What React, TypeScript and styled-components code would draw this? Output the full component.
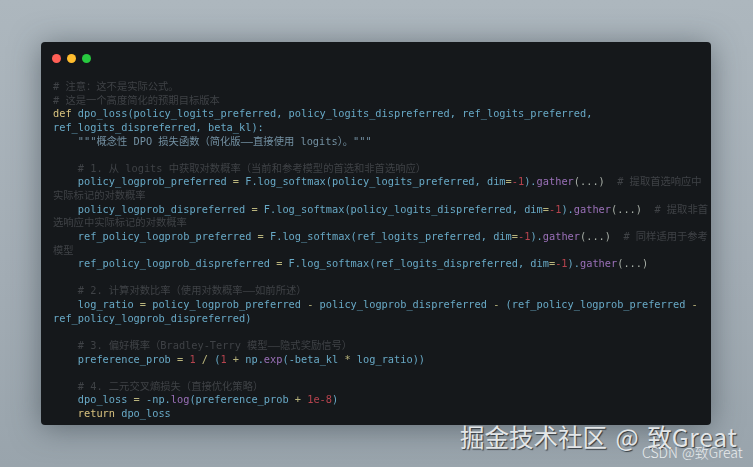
import React from "react";
import styled, { createGlobalStyle } from "styled-components";

const Global = createGlobalStyle`
  html, body { margin: 0; padding: 0; }
  body { width: 753px; height: 467px; overflow: hidden; }
`;

const Page = styled.div`
  position: relative;
  width: 753px;
  height: 467px;
  padding: 42px 42px 42px 41px;
  box-sizing: border-box;
  background: linear-gradient(180deg, #adb7be 0%, #a2acb4 60%, #99a4ac 100%);
  overflow: hidden;
`;

const Window = styled.div`
  height: 383px;
  box-sizing: border-box;
  padding: 12px 12px 0 12px;
  background: #15181b;
  border-radius: 4px;
  box-shadow: 0 3px 30px rgba(50, 60, 68, 0.55);
`;

const Dots = styled.div`
  display: flex;
  gap: 6px;
  margin-left: -1px;
  height: 10px;
`;

const Dot = styled.span<{ $c: string }>`
  width: 9px;
  height: 9px;
  border-radius: 50%;
  background: ${(p) => p.$c};
`;

const Code = styled.pre`
  margin: 16px 0 0;
  font-family: "DejaVu Sans Mono", "Noto Sans CJK SC", monospace;
  font-size: 10.3px;
  line-height: 13.63px;
  color: #68a9c6;
  filter: blur(0.45px);
`;

const Line = styled.div`
  height: 13.63px;
  white-space: pre;
`;

const Cm = styled.span`
  color: #3f4246;
`;
const Kw = styled.span`
  color: #d8c27e;
`;
const Op = styled.span`
  color: #b9b47c;
`;
const Num = styled.span`
  color: #b5434e;
`;
const Fn = styled.span`
  color: #9a70b8;
`;
const Str = styled.span`
  color: #7390a2;
`;
const Pn = styled.span`
  color: #a9b0a8;
`;

const Mark = styled.div`
  position: absolute;
  left: 460px;
  top: 422px;
  font-family: "Noto Sans CJK SC", "Noto Sans", sans-serif;
  font-size: 24.5px;
  line-height: 30px;
  word-spacing: 3px;
  color: #e3e6e8;
  white-space: nowrap;
  text-shadow: 1px 1px 1px rgba(35, 40, 45, 0.85);
`;

const Latin = styled.span`
  letter-spacing: 0.8px;
`;

const Csdn = styled.div`
  position: absolute;
  left: 642px;
  top: 443px;
  font-family: "Noto Sans CJK SC", "Noto Sans", sans-serif;
  font-weight: 300;
  font-size: 14px;
  line-height: 18px;
  word-spacing: 1px;
  color: #e8ebed;
  white-space: nowrap;
`;

export default function App() {
  return (
    <Page>
      <Global />
      <Window>
        <Dots>
          <Dot $c="#ff5f56" />
          <Dot $c="#ffbd2e" />
          <Dot $c="#27c93f" />
        </Dots>
        <Code>
          <Line><Cm># 注意：这不是实际公式。</Cm></Line>
          <Line><Cm># 这是一个高度简化的预期目标版本</Cm></Line>
          <Line><Kw>def</Kw> dpo_loss(policy_logits_preferred, policy_logits_dispreferred, ref_logits_preferred,</Line>
          <Line>ref_logits_dispreferred, beta_kl):</Line>
          <Line><Str>    """概念性 DPO 损失函数（简化版——直接使用 logits）。"""</Str></Line>
          <Line> </Line>
          <Line><Cm>    # 1. 从 logits 中获取对数概率（当前和参考模型的首选和非首选响应）</Cm></Line>
          <Line>    policy_logprob_preferred <Op>=</Op> F.log_softmax(policy_logits_preferred, dim<Op>=</Op><Num>-1</Num>).<Fn>gather</Fn><Pn>(...)</Pn>  <Cm># 提取首选响应中</Cm></Line>
          <Line><Cm>实际标记的对数概率</Cm></Line>
          <Line>    policy_logprob_dispreferred <Op>=</Op> F.log_softmax(policy_logits_dispreferred, dim<Op>=</Op><Num>-1</Num>).<Fn>gather</Fn><Pn>(...)</Pn>  <Cm># 提取非首</Cm></Line>
          <Line><Cm>选响应中实际标记的对数概率</Cm></Line>
          <Line>    ref_policy_logprob_preferred <Op>=</Op> F.log_softmax(ref_logits_preferred, dim<Op>=</Op><Num>-1</Num>).<Fn>gather</Fn><Pn>(...)</Pn>  <Cm># 同样适用于参考</Cm></Line>
          <Line><Cm>模型</Cm></Line>
          <Line>    ref_policy_logprob_dispreferred <Op>=</Op> F.log_softmax(ref_logits_dispreferred, dim<Op>=</Op><Num>-1</Num>).<Fn>gather</Fn><Pn>(...)</Pn></Line>
          <Line> </Line>
          <Line><Cm>    # 2. 计算对数比率（使用对数概率——如前所述）</Cm></Line>
          <Line>    log_ratio <Op>=</Op> policy_logprob_preferred <Op>-</Op> policy_logprob_dispreferred <Op>-</Op> (ref_policy_logprob_preferred <Op>-</Op></Line>
          <Line>ref_policy_logprob_dispreferred)</Line>
          <Line> </Line>
          <Line><Cm>    # 3. 偏好概率（Bradley-Terry 模型——隐式奖励信号）</Cm></Line>
          <Line>    preference_prob <Op>=</Op> <Num>1</Num> <Op>/</Op> (<Num>1</Num> <Op>+</Op> np.<Fn>exp</Fn>(-beta_kl <Op>*</Op> log_ratio))</Line>
          <Line> </Line>
          <Line><Cm>    # 4. 二元交叉熵损失（直接优化策略）</Cm></Line>
          <Line>    dpo_loss <Op>=</Op> -np.<Fn>log</Fn>(preference_prob <Op>+</Op> <Num>1e-8</Num>)</Line>
          <Line>    <Kw>return</Kw> dpo_loss</Line>
        </Code>
      </Window>
      <Mark>掘金技术社区 @ 致<Latin>Great</Latin></Mark>
      <Csdn>CSDN @致Great</Csdn>
    </Page>
  );
}
